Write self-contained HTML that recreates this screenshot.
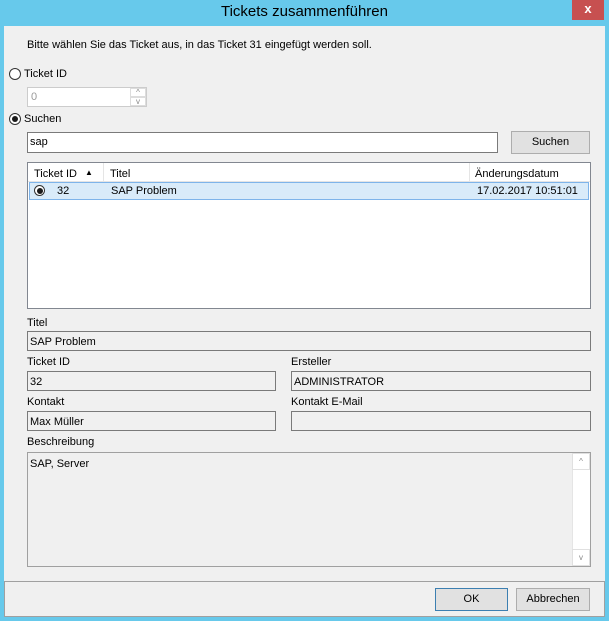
<!DOCTYPE html>
<html><head><meta charset="utf-8"><style>
*{box-sizing:border-box;margin:0;padding:0}
body{width:609px;height:621px;background:#67c9eb;font-family:"Liberation Sans",sans-serif;font-size:11px;color:#000;position:relative;overflow:hidden}
.a{position:absolute}
.t{position:absolute;white-space:nowrap;line-height:14px}
.box{position:absolute;border:1px solid #7a7a7a;background:#f0f0f0}
.wbox{position:absolute;border:1px solid #7a7a7a;background:#fff}
.btn{position:absolute;border:1px solid #adadad;background:#e1e1e1;text-align:center;line-height:20px}
.rad{position:absolute;width:12px;height:12px;border:1px solid #333;border-radius:50%;background:#fff}
.rad.on::after{content:"";position:absolute;left:2px;top:2px;width:6px;height:6px;border-radius:50%;background:#1a1a1a}
</style></head><body>
<div class="t" style="left:0;width:609px;top:3px;text-align:center;font-size:15px;line-height:18px;color:#000">Tickets zusammenführen</div>
<div class="a" style="left:572px;top:0;width:32px;height:20px;background:#c75050;color:#fff;font-weight:bold;font-size:13px;text-align:center;line-height:18px">x</div>
<div class="a" style="left:4px;top:26px;width:601px;height:591px;background:#f0f0f0"></div>
<div class="t" style="left:27px;top:38px">Bitte wählen Sie das Ticket aus, in das Ticket 31 eingefügt werden soll.</div>
<div class="rad" style="left:9px;top:68px"></div>
<div class="t" style="left:24px;top:67px">Ticket ID</div>
<div class="a" style="left:27px;top:87px;width:120px;height:20px;border:1px solid #ccc;background:#fff"></div>
<div class="t" style="left:31px;top:90px;color:#999">0</div>
<div class="a" style="left:130px;top:88px;width:16px;height:9px;border:1px solid #ddd;font-size:8px;color:#888;text-align:center;line-height:8px">^</div>
<div class="a" style="left:130px;top:97px;width:16px;height:9px;border:1px solid #ddd;font-size:8px;color:#888;text-align:center;line-height:8px">v</div>
<div class="rad on" style="left:9px;top:113px"></div>
<div class="t" style="left:24px;top:112px">Suchen</div>
<div class="wbox" style="left:27px;top:132px;width:471px;height:21px"></div>
<div class="t" style="left:30px;top:135px">sap</div>
<div class="btn" style="left:511px;top:131px;width:79px;height:23px">Suchen</div>
<div class="wbox" style="left:27px;top:162px;width:564px;height:147px;border-color:#828790"></div>
<div class="a" style="left:28px;top:163px;width:562px;height:19px;background:#fff;border-bottom:1px solid #e5e5e5"></div>
<div class="a" style="left:103px;top:163px;width:1px;height:19px;background:#e5e5e5"></div>
<div class="a" style="left:469px;top:163px;width:1px;height:19px;background:#e5e5e5"></div>
<div class="t" style="left:34px;top:167px">Ticket ID</div>
<div class="t" style="left:85px;top:166px;font-size:8px">▲</div>
<div class="t" style="left:110px;top:167px">Titel</div>
<div class="t" style="left:475px;top:167px">Änderungsdatum</div>
<div class="a" style="left:29px;top:182px;width:560px;height:18px;background:#d9ebf9;border:1px solid #7eb4ea"></div>
<div class="rad on" style="left:34px;top:185px;width:11px;height:11px"></div>
<div class="t" style="left:57px;top:184px">32</div>
<div class="t" style="left:111px;top:184px">SAP Problem</div>
<div class="t" style="left:477px;top:184px">17.02.2017 10:51:01</div>
<div class="t" style="left:27px;top:316px">Titel</div>
<div class="box" style="left:27px;top:331px;width:564px;height:20px"></div>
<div class="t" style="left:30px;top:335px">SAP Problem</div>
<div class="t" style="left:27px;top:355px">Ticket ID</div>
<div class="box" style="left:27px;top:371px;width:249px;height:20px"></div>
<div class="t" style="left:30px;top:375px">32</div>
<div class="t" style="left:291px;top:355px">Ersteller</div>
<div class="box" style="left:291px;top:371px;width:300px;height:20px"></div>
<div class="t" style="left:294px;top:375px">ADMINISTRATOR</div>
<div class="t" style="left:27px;top:395px">Kontakt</div>
<div class="box" style="left:27px;top:411px;width:249px;height:20px"></div>
<div class="t" style="left:30px;top:415px">Max Müller</div>
<div class="t" style="left:291px;top:395px">Kontakt E-Mail</div>
<div class="box" style="left:291px;top:411px;width:300px;height:20px"></div>
<div class="t" style="left:27px;top:435px">Beschreibung</div>
<div class="box" style="left:27px;top:452px;width:564px;height:115px;border-color:#a0a0a0"></div>
<div class="a" style="left:572px;top:453px;width:18px;height:113px;background:#fff;border-left:1px solid #e5e5e5"></div>
<div class="a" style="left:572px;top:453px;width:18px;height:17px;border:1px solid #e0e0e0;font-size:8px;color:#888;text-align:center;line-height:16px">^</div>
<div class="a" style="left:572px;top:549px;width:18px;height:17px;border:1px solid #e0e0e0;font-size:8px;color:#888;text-align:center;line-height:16px">v</div>
<div class="t" style="left:30px;top:457px">SAP, Server</div>
<div class="a" style="left:4px;top:581px;width:601px;height:36px;border:1px solid #a0a0a0;background:#f0f0f0"></div>
<div class="btn" style="left:435px;top:588px;width:73px;height:23px;border-color:#3c7fb1">OK</div>
<div class="btn" style="left:516px;top:588px;width:74px;height:23px">Abbrechen</div>
</body></html>
